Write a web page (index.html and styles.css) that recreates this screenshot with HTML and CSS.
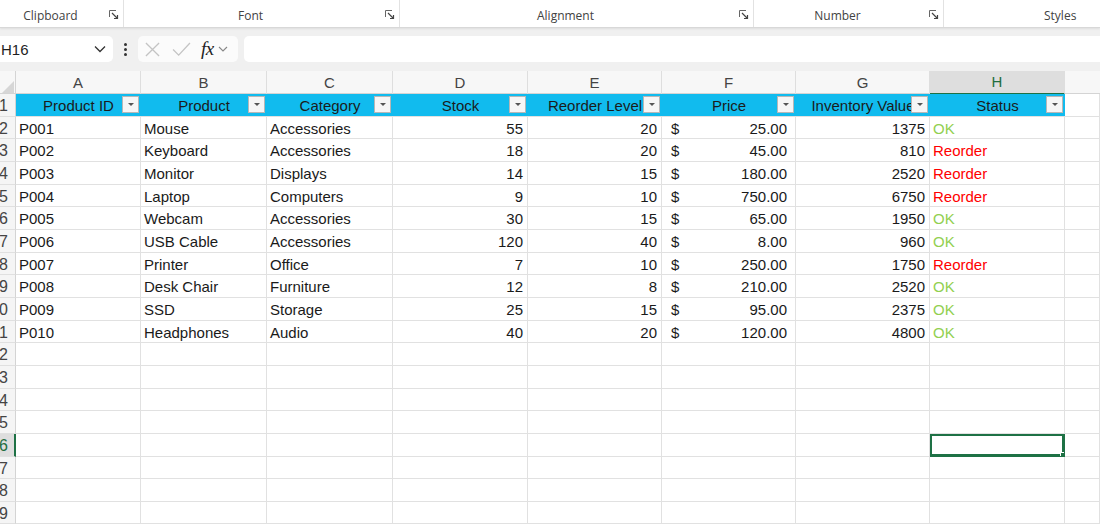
FILE: index.html
```html
<!DOCTYPE html>
<html>
<head>
<meta charset="utf-8">
<link rel="stylesheet" href="styles.css">
</head>
<body>
<div class="ribbon">
  <div class="group g-clip"><span class="glabel">Clipboard</span><svg class="launch" viewBox="0 0 10 10"><path d="M0.5 7V0.5H7" fill="none" stroke="#666" stroke-width="1"/><path d="M3 3L8.5 8.5M8.5 5V8.5H5" fill="none" stroke="#444" stroke-width="1.2"/></svg></div>
  <div class="group g-font"><span class="glabel">Font</span><svg class="launch" viewBox="0 0 10 10"><path d="M0.5 7V0.5H7" fill="none" stroke="#666" stroke-width="1"/><path d="M3 3L8.5 8.5M8.5 5V8.5H5" fill="none" stroke="#444" stroke-width="1.2"/></svg></div>
  <div class="group g-align"><span class="glabel">Alignment</span><svg class="launch" viewBox="0 0 10 10"><path d="M0.5 7V0.5H7" fill="none" stroke="#666" stroke-width="1"/><path d="M3 3L8.5 8.5M8.5 5V8.5H5" fill="none" stroke="#444" stroke-width="1.2"/></svg></div>
  <div class="group g-num"><span class="glabel">Number</span><svg class="launch" viewBox="0 0 10 10"><path d="M0.5 7V0.5H7" fill="none" stroke="#666" stroke-width="1"/><path d="M3 3L8.5 8.5M8.5 5V8.5H5" fill="none" stroke="#444" stroke-width="1.2"/></svg></div>
  <div class="group g-styles"><span class="glabel">Styles</span></div>
</div>
<div class="fbar">
  <div class="namebox"><span>H16</span><svg class="chev" viewBox="0 0 12 8"><path d="M1 1.5L6 6.5L11 1.5" fill="none" stroke="#333" stroke-width="1.3"/></svg></div>
  <div class="vdots"><i></i><i></i><i></i></div>
  <div class="fbtns">
    <svg class="fx-x" viewBox="0 0 16 16"><path d="M1 1L15 15M15 1L1 15" stroke="#c4c4c4" stroke-width="1.4" fill="none"/></svg>
    <svg class="fx-ok" viewBox="0 0 20 16"><path d="M1 8L7 14L19 1" stroke="#c4c4c4" stroke-width="1.4" fill="none"/></svg>
    <span class="fx">fx</span>
    <svg class="fx-chev" viewBox="0 0 10 6"><path d="M1 1L5 5L9 1" fill="none" stroke="#888" stroke-width="1.1"/></svg>
  </div>
  <div class="finput"></div>
</div>
<div class="sheet">
  <div class="row colhead">
    <div class="corner"><svg viewBox="0 0 16 16"><path d="M15 3V15H3Z" fill="#d6d6d6"/></svg></div>
    <div class="ch">A</div><div class="ch">B</div><div class="ch">C</div><div class="ch">D</div><div class="ch">E</div><div class="ch">F</div><div class="ch">G</div><div class="ch ch-sel">H</div><div class="ch ch-rest"></div>
  </div>
  <div class="row hdr">
    <div class="rh"><span>1</span></div>
    <div class="hc">Product ID<b class="flt"></b></div>
    <div class="hc">Product<b class="flt"></b></div>
    <div class="hc">Category<b class="flt"></b></div>
    <div class="hc">Stock<b class="flt"></b></div>
    <div class="hc">Reorder Level<b class="flt"></b></div>
    <div class="hc">Price<b class="flt"></b></div>
    <div class="hc">Inventory Value<b class="flt"></b></div>
    <div class="hc">Status<b class="flt"></b></div>
    <div class="c"></div>
  </div>
  <div class="row"><div class="rh"><span>2</span></div><div class="c">P001</div><div class="c">Mouse</div><div class="c">Accessories</div><div class="c n">55</div><div class="c n">20</div><div class="c p"><span>$</span><span>25.00</span></div><div class="c n">1375</div><div class="c ok">OK</div><div class="c"></div></div>
  <div class="row"><div class="rh"><span>3</span></div><div class="c">P002</div><div class="c">Keyboard</div><div class="c">Accessories</div><div class="c n">18</div><div class="c n">20</div><div class="c p"><span>$</span><span>45.00</span></div><div class="c n">810</div><div class="c re">Reorder</div><div class="c"></div></div>
  <div class="row"><div class="rh"><span>4</span></div><div class="c">P003</div><div class="c">Monitor</div><div class="c">Displays</div><div class="c n">14</div><div class="c n">15</div><div class="c p"><span>$</span><span>180.00</span></div><div class="c n">2520</div><div class="c re">Reorder</div><div class="c"></div></div>
  <div class="row"><div class="rh"><span>5</span></div><div class="c">P004</div><div class="c">Laptop</div><div class="c">Computers</div><div class="c n">9</div><div class="c n">10</div><div class="c p"><span>$</span><span>750.00</span></div><div class="c n">6750</div><div class="c re">Reorder</div><div class="c"></div></div>
  <div class="row"><div class="rh"><span>6</span></div><div class="c">P005</div><div class="c">Webcam</div><div class="c">Accessories</div><div class="c n">30</div><div class="c n">15</div><div class="c p"><span>$</span><span>65.00</span></div><div class="c n">1950</div><div class="c ok">OK</div><div class="c"></div></div>
  <div class="row"><div class="rh"><span>7</span></div><div class="c">P006</div><div class="c">USB Cable</div><div class="c">Accessories</div><div class="c n">120</div><div class="c n">40</div><div class="c p"><span>$</span><span>8.00</span></div><div class="c n">960</div><div class="c ok">OK</div><div class="c"></div></div>
  <div class="row"><div class="rh"><span>8</span></div><div class="c">P007</div><div class="c">Printer</div><div class="c">Office</div><div class="c n">7</div><div class="c n">10</div><div class="c p"><span>$</span><span>250.00</span></div><div class="c n">1750</div><div class="c re">Reorder</div><div class="c"></div></div>
  <div class="row"><div class="rh"><span>9</span></div><div class="c">P008</div><div class="c">Desk Chair</div><div class="c">Furniture</div><div class="c n">12</div><div class="c n">8</div><div class="c p"><span>$</span><span>210.00</span></div><div class="c n">2520</div><div class="c ok">OK</div><div class="c"></div></div>
  <div class="row"><div class="rh"><span>10</span></div><div class="c">P009</div><div class="c">SSD</div><div class="c">Storage</div><div class="c n">25</div><div class="c n">15</div><div class="c p"><span>$</span><span>95.00</span></div><div class="c n">2375</div><div class="c ok">OK</div><div class="c"></div></div>
  <div class="row"><div class="rh"><span>11</span></div><div class="c">P010</div><div class="c">Headphones</div><div class="c">Audio</div><div class="c n">40</div><div class="c n">20</div><div class="c p"><span>$</span><span>120.00</span></div><div class="c n">4800</div><div class="c ok">OK</div><div class="c"></div></div>
  <div class="row"><div class="rh"><span>12</span></div><div class="c"></div><div class="c"></div><div class="c"></div><div class="c"></div><div class="c"></div><div class="c"></div><div class="c"></div><div class="c"></div><div class="c"></div></div>
  <div class="row"><div class="rh"><span>13</span></div><div class="c"></div><div class="c"></div><div class="c"></div><div class="c"></div><div class="c"></div><div class="c"></div><div class="c"></div><div class="c"></div><div class="c"></div></div>
  <div class="row"><div class="rh"><span>14</span></div><div class="c"></div><div class="c"></div><div class="c"></div><div class="c"></div><div class="c"></div><div class="c"></div><div class="c"></div><div class="c"></div><div class="c"></div></div>
  <div class="row"><div class="rh"><span>15</span></div><div class="c"></div><div class="c"></div><div class="c"></div><div class="c"></div><div class="c"></div><div class="c"></div><div class="c"></div><div class="c"></div><div class="c"></div></div>
  <div class="row"><div class="rh rh-sel"><span>16</span></div><div class="c"></div><div class="c"></div><div class="c"></div><div class="c"></div><div class="c"></div><div class="c"></div><div class="c"></div><div class="c sel"><i class="handle"></i></div><div class="c"></div></div>
  <div class="row"><div class="rh"><span>17</span></div><div class="c"></div><div class="c"></div><div class="c"></div><div class="c"></div><div class="c"></div><div class="c"></div><div class="c"></div><div class="c"></div><div class="c"></div></div>
  <div class="row"><div class="rh"><span>18</span></div><div class="c"></div><div class="c"></div><div class="c"></div><div class="c"></div><div class="c"></div><div class="c"></div><div class="c"></div><div class="c"></div><div class="c"></div></div>
  <div class="row"><div class="rh"><span>19</span></div><div class="c"></div><div class="c"></div><div class="c"></div><div class="c"></div><div class="c"></div><div class="c"></div><div class="c"></div><div class="c"></div><div class="c"></div></div>
</div>
</body>
</html>
```
FILE: styles.css
```css
html, body {
  margin: 0;
  padding: 0;
  width: 1100px;
  height: 524px;
  overflow: hidden;
  background: #ffffff;
  font-family: "Liberation Sans", Arial, sans-serif;
  color: #1f1f1f;
}

/* Ribbon */
.ribbon {
  display: flex;
  height: 27px;
  background: #ffffff;
  border-bottom: 1px solid #d8d8d8;
  box-shadow: 0 1px 2px rgba(0,0,0,0.08);
  position: relative;
  z-index: 1;
}
.group {
  display: flex;
  align-items: center;
  height: 27px;
  border-right: 1px solid #e2e2e2;
  box-sizing: border-box;
  padding-top: 3px;
}
.g-clip { width: 124px; }
.g-font { width: 276px; }
.g-align { width: 354px; }
.g-num { width: 190px; }
.g-styles { flex: 1; border-right: none; padding-left: 100px; }
.glabel {
  flex: 1;
  text-align: center;
  font-family: "Open Sans", "Noto Sans", sans-serif;
  font-size: 12px;
  color: #424242;
}
.g-styles .glabel { flex: none; }
.launch {
  width: 10px;
  height: 10px;
  margin: 0 4px 0 8px;
}

/* Formula bar */
.fbar {
  display: flex;
  align-items: center;
  height: 26px;
  padding: 9px 0 9px 0;
  background: #f0f0f0;
  margin-top: -1px;
}
.namebox {
  width: 113px;
  height: 26px;
  background: #ffffff;
  border-radius: 0 5px 5px 0;
  display: flex;
  align-items: center;
  justify-content: space-between;
  box-sizing: border-box;
  padding: 0 7px 0 1px;
  font-size: 15px;
  color: #1f1f1f;
}
.chev { width: 12px; height: 8px; }
.vdots {
  width: 25px;
  display: flex;
  flex-direction: column;
  align-items: center;
  gap: 2px;
}
.vdots i {
  display: block;
  width: 3px;
  height: 3px;
  background: #333;
  border-radius: 50%;
}
.fbtns {
  width: 100px;
  height: 26px;
  background: #fbfbfb;
  border-radius: 5px;
  display: flex;
  align-items: center;
  box-sizing: border-box;
  padding-left: 7px;
}
.fx-x { width: 15px; height: 15px; margin-right: 12px; }
.fx-ok { width: 19px; height: 15px; margin-right: 10px; }
.fx {
  font-family: "Liberation Serif", "DejaVu Serif", serif;
  font-style: italic;
  font-size: 19px;
  color: #222;
  margin-right: 2px;
  letter-spacing: -0.5px;
}
.fx-chev { width: 10px; height: 6px; margin-left: 2px; }
.finput {
  flex: 1;
  height: 26px;
  background: #ffffff;
  border-radius: 5px 0 0 5px;
  margin-left: 6px;
}

/* Sheet */
.sheet {
  background: #ffffff;
}
.row {
  display: grid;
  grid-template-columns: 16px 125px 126px 126px 135px 134px 134px 134px 135px 1fr;
  height: 22.67px;
  font-size: 15px;
  line-height: 24px;
}
.colhead {
  height: 23px;
  background: #f7f7f7;
  border-bottom: 1px solid #d4d4d4;
  box-sizing: border-box;
}
.corner {
  border-right: 1px solid #d4d4d4;
  position: relative;
}
.corner svg {
  width: 16px;
  height: 16px;
  position: absolute;
  right: 0;
  bottom: 1px;
}
.ch {
  text-align: center;
  color: #444;
  font-size: 15px;
  line-height: 23px;
  border-right: 1px solid #dedede;
}
.ch-sel {
  background: #dedede;
  color: #1e6e3e;
  border-bottom: 2px solid #1e7145;
  line-height: 22px;
}
.ch-rest { border-right: none; }

.rh {
  background: #f5f5f5;
  border-right: 1px solid #d4d4d4;
  border-bottom: 1px solid #e0e0e0;
  box-sizing: border-box;
  overflow: hidden;
  display: flex;
  justify-content: flex-end;
  color: #444;
  font-size: 16px;
  line-height: 24px;
}
.rh span { margin-right: 7px; white-space: nowrap; flex: none; }
.rh-sel {
  background: #dedede;
  color: #1e6e3e;
  border-right: 2px solid #1e7145;
}
.rh-sel span { margin-right: 6px; }

.c {
  border-right: 1px solid #e1e1e1;
  border-bottom: 1px solid #e1e1e1;
  box-sizing: border-box;
  padding: 0 3px;
  white-space: nowrap;
  overflow: hidden;
  color: #1a1a1a;
}
.n { text-align: right; padding-right: 4px; }
.p {
  display: flex;
  justify-content: space-between;
  padding: 0 8px 0 9px;
}
.ok { color: #92d050; }
.re { color: #ff0000; }

.hdr .hc {
  background: #11bbee;
  position: relative;
  display: flex;
  justify-content: center;
  color: #1b1b1b;
  white-space: nowrap;
  overflow: hidden;
  border-bottom: 1px solid #e1e1e1;
  box-sizing: border-box;
}
.flt {
  position: absolute;
  right: 2px;
  top: 2px;
  width: 17px;
  height: 17px;
  box-sizing: border-box;
  background: #f6f6f6;
  border: 1px solid #b7b7b7;
}
.flt::after {
  content: "";
  position: absolute;
  left: 5px;
  top: 6px;
  border-left: 3px solid transparent;
  border-right: 3px solid transparent;
  border-top: 3px solid #555;
}

.sel {
  position: relative;
  box-shadow: inset 0 0 0 2px #1e7145;
  border-right-color: #1e7145;
  border-bottom-color: #1e7145;
}
.handle {
  position: absolute;
  right: -3px;
  bottom: -3px;
  width: 5px;
  height: 5px;
  background: #1e7145;
  border: 1px solid #fff;
  z-index: 2;
}
```
